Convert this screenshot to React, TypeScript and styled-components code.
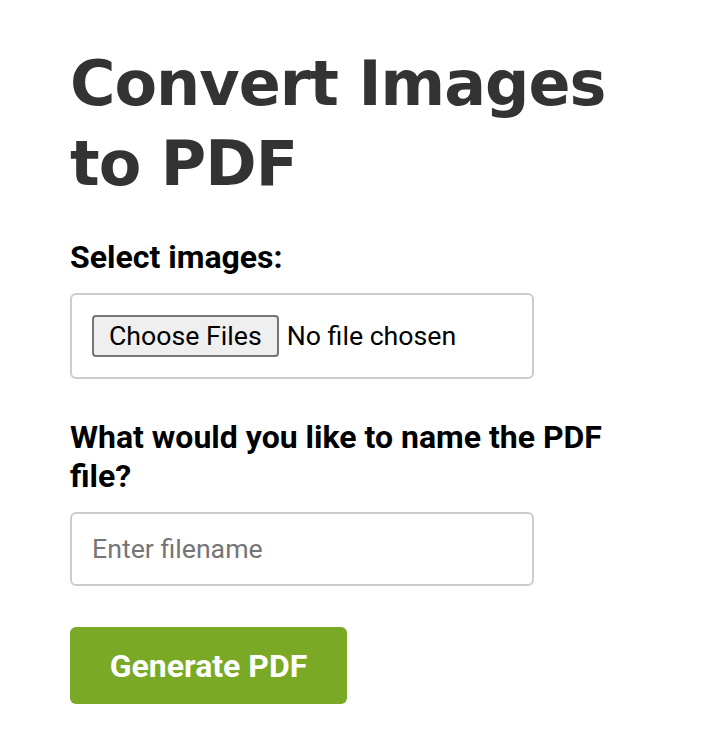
import * as React from 'react';
import styled, { createGlobalStyle } from 'styled-components';

const GlobalStyle = createGlobalStyle`
  html, body {
    margin: 0;
    padding: 0;
    background: #fff;
  }
  body {
    font-family: Roboto, "Liberation Sans", Arial, sans-serif;
    color: #000;
  }
`;

const Page = styled.main`
  width: 580px;
  padding: 44px 0 40px 70px;
`;

const Title = styled.h1`
  margin: 0 0 34px;
  font-family: "DejaVu Sans", "Open Sans", sans-serif;
  font-weight: 700;
  font-size: 62px;
  line-height: 80px;
  letter-spacing: -1px;
  color: #333;
`;

const Form = styled.form`
  display: flex;
  flex-direction: column;
  align-items: flex-start;
`;

const Field = styled.div`
  width: 100%;
  margin-bottom: 39px;
`;

const Label = styled.label`
  display: block;
  font-size: 32px;
  font-weight: 700;
  line-height: 39px;
  margin-bottom: 16px;
`;

const Box = styled.div`
  box-sizing: border-box;
  width: 80%;
  height: 86px;
  padding: 20px;
  border: 2px solid #ccc;
  border-radius: 6px;
`;

const FileInput = styled.input`
  display: block;
  height: 42px;
  font-family: Roboto, sans-serif;
  font-size: 26.7px;
  line-height: normal;
  color: #000;

  &::file-selector-button {
    font: inherit;
    height: 42px;
    padding: 0 15px;
    margin-right: 8px;
    border: 2px solid #767676;
    border-radius: 4px;
    background: #efefef;
    color: #000;
  }
`;

const TextInput = styled.input`
  box-sizing: border-box;
  display: block;
  width: 80%;
  height: 74px;
  padding: 0 20px;
  border: 2px solid #ccc;
  border-radius: 6px;
  font-family: Roboto, sans-serif;
  font-size: 26.7px;
  outline: none;
  &::placeholder {
    color: #757575;
  }
`;

const Submit = styled.button`
  width: 277px;
  height: 77px;
  margin-top: 2px;
  border: none;
  border-radius: 6px;
  background: #79a925;
  color: #fff;
  font-family: Roboto, sans-serif;
  font-size: 32px;
  font-weight: 700;
  cursor: pointer;
`;

export default function App() {
  return (
    <>
      <GlobalStyle />
      <Page>
        <Title>Convert Images to PDF</Title>
        <Form onSubmit={e => e.preventDefault()}>
          <Field>
            <Label htmlFor="images">Select images:</Label>
            <Box>
              <FileInput id="images" type="file" accept="image/*" multiple />
            </Box>
          </Field>
          <Field>
            <Label htmlFor="filename">What would you like to name the PDF file?</Label>
            <TextInput id="filename" type="text" placeholder="Enter filename" />
          </Field>
          <Submit type="submit">Generate PDF</Submit>
        </Form>
      </Page>
    </>
  );
}
